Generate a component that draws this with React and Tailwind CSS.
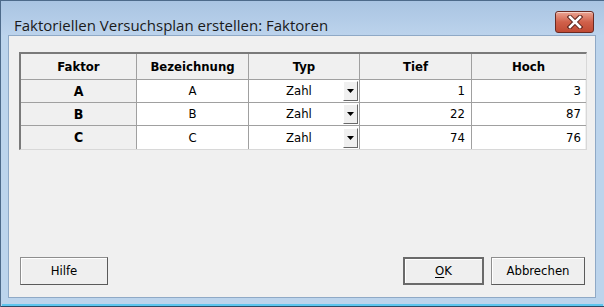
import React from "react";

const cols = [116, 112, 111, 112, 113];

function Cell({ w, children, className = "" }) {
  return (
    <div
      style={{ width: w }}
      className={`shrink-0 flex items-center border-r border-[#a0a0a0] last:border-r-0 ${className}`}
    >
      {children}
    </div>
  );
}

function DropBtn() {
  return (
    <div className="ml-auto mr-[1px] w-[15px] h-[20px] bg-[#f0f0f0] border border-t-[#ffffff] border-l-[#ffffff] border-r-[#696969] border-b-[#696969] flex items-center justify-center">
      <svg width="7" height="4" viewBox="0 0 7 4">
        <path d="M0 0h7L3.5 4z" fill="#000" />
      </svg>
    </div>
  );
}

export default function App() {
  const rows = [
    ["A", "A", "Zahl", "1", "3"],
    ["B", "B", "Zahl", "22", "87"],
    ["C", "C", "Zahl", "74", "76"],
  ];
  const cellFont = { fontFamily: "'DejaVu Sans Condensed', Tahoma, 'DejaVu Sans', sans-serif" };
  return (
    <div className="w-[604px] h-[307px] overflow-hidden bg-[#bcd4ec] border-l border-t border-[#4d6a8a] flex flex-col relative">
      {/* title bar */}
      <div className="h-[34px] shrink-0 flex items-start bg-gradient-to-b from-[#a9c4e2] to-[#bcd3ec]">
        <div
          className="pl-[13px] pt-[14px] text-[15px] leading-[20px] text-[#1a1a1a]"
          style={{ fontFamily: "'Open Sans', 'Noto Sans', sans-serif" }}
        >
          Faktoriellen Versuchsplan erstellen: Faktoren
        </div>
        <div className="ml-auto mr-[10px] mt-[10px] w-[39px] h-[22px] rounded-[3px] border border-[#6b2a22] bg-gradient-to-b from-[#eba493] via-[#d0604a] to-[#c04a34] flex items-center justify-center shadow-[inset_0_1px_0_rgba(255,255,255,0.5)]">
          <svg width="16" height="14" viewBox="0 0 16 14">
            <path d="M3 2L13 12M13 2L3 12" stroke="#5a2018" strokeWidth="4.5" strokeLinecap="square" />
            <path d="M3 2L13 12M13 2L3 12" stroke="#ffffff" strokeWidth="2.6" strokeLinecap="square" />
          </svg>
        </div>
      </div>
      {/* client area */}
      <div className="ml-[7px] mr-[8px] h-[263px] shrink-0 bg-[#f0f0f0] border border-[#8fa9c6] flex flex-col">
        {/* table */}
        <div className="ml-[10px] mt-[16px] w-[568px] border-t-2 border-l-2 border-t-[#7a7a7a] border-l-[#7a7a7a] border-r border-b border-r-[#d8d8d8] border-b-[#d8d8d8]" style={cellFont}>
          <div className="flex h-[26px] border-b border-[#a0a0a0] bg-[#f0f0f0] text-[13px] font-bold text-[#000]">
            {["Faktor", "Bezeichnung", "Typ", "Tief", "Hoch"].map((h, i) => (
              <Cell key={h} w={cols[i]} className="justify-center">{h}</Cell>
            ))}
          </div>
          {rows.map((r, ri) => (
            <div key={ri} className="flex h-[23px] border-b border-[#a0a0a0] last:border-b-0 text-[13px] text-[#000]">
              <Cell w={cols[0]} className="justify-center bg-[#f0f0f0] font-bold text-[14px]">{r[0]}</Cell>
              <Cell w={cols[1]} className="justify-center bg-white">{r[1]}</Cell>
              <Cell w={cols[2]} className="bg-white relative">
                <span className="absolute left-[37px]">{r[2]}</span>
                <DropBtn />
              </Cell>
              <Cell w={cols[3]} className="justify-end pr-[6px] bg-white">{r[3]}</Cell>
              <Cell w={cols[4]} className="justify-end pr-[4px] bg-white">{r[4]}</Cell>
            </div>
          ))}
        </div>
        <div className="flex-1" />
        {/* buttons */}
        <div className="flex items-center mb-[12px] ml-[11px] mr-[10px] text-[13px]" style={cellFont}>
          <button className="w-[88px] h-[28px] bg-[#efefef] border border-[#8e8e8e] border-r-[#5a5a5a] border-b-[#5a5a5a] shadow-[inset_1px_1px_0_#ffffff] text-[#000]">
            Hilfe
          </button>
          <div className="flex-1" />
          <button className="w-[81px] h-[28px] bg-[#efefef] border-2 border-[#6a6a6a] shadow-[inset_1px_1px_0_#ffffff] text-[#000]">
            <span className="underline underline-offset-2">O</span>K
          </button>
          <button className="ml-[7px] w-[94px] h-[28px] bg-[#efefef] border border-[#8e8e8e] border-r-[#5a5a5a] border-b-[#5a5a5a] shadow-[inset_1px_1px_0_#ffffff] text-[#000]">
            Abbrechen
          </button>
        </div>
      </div>
      <div className="flex-1 bg-[#bcd4ec]" />
      <div className="h-[2px] bg-[#5ec6ee] mx-[1px]" />
      <div className="h-[1px] bg-[#2d4a66]" />
    </div>
  );
}
